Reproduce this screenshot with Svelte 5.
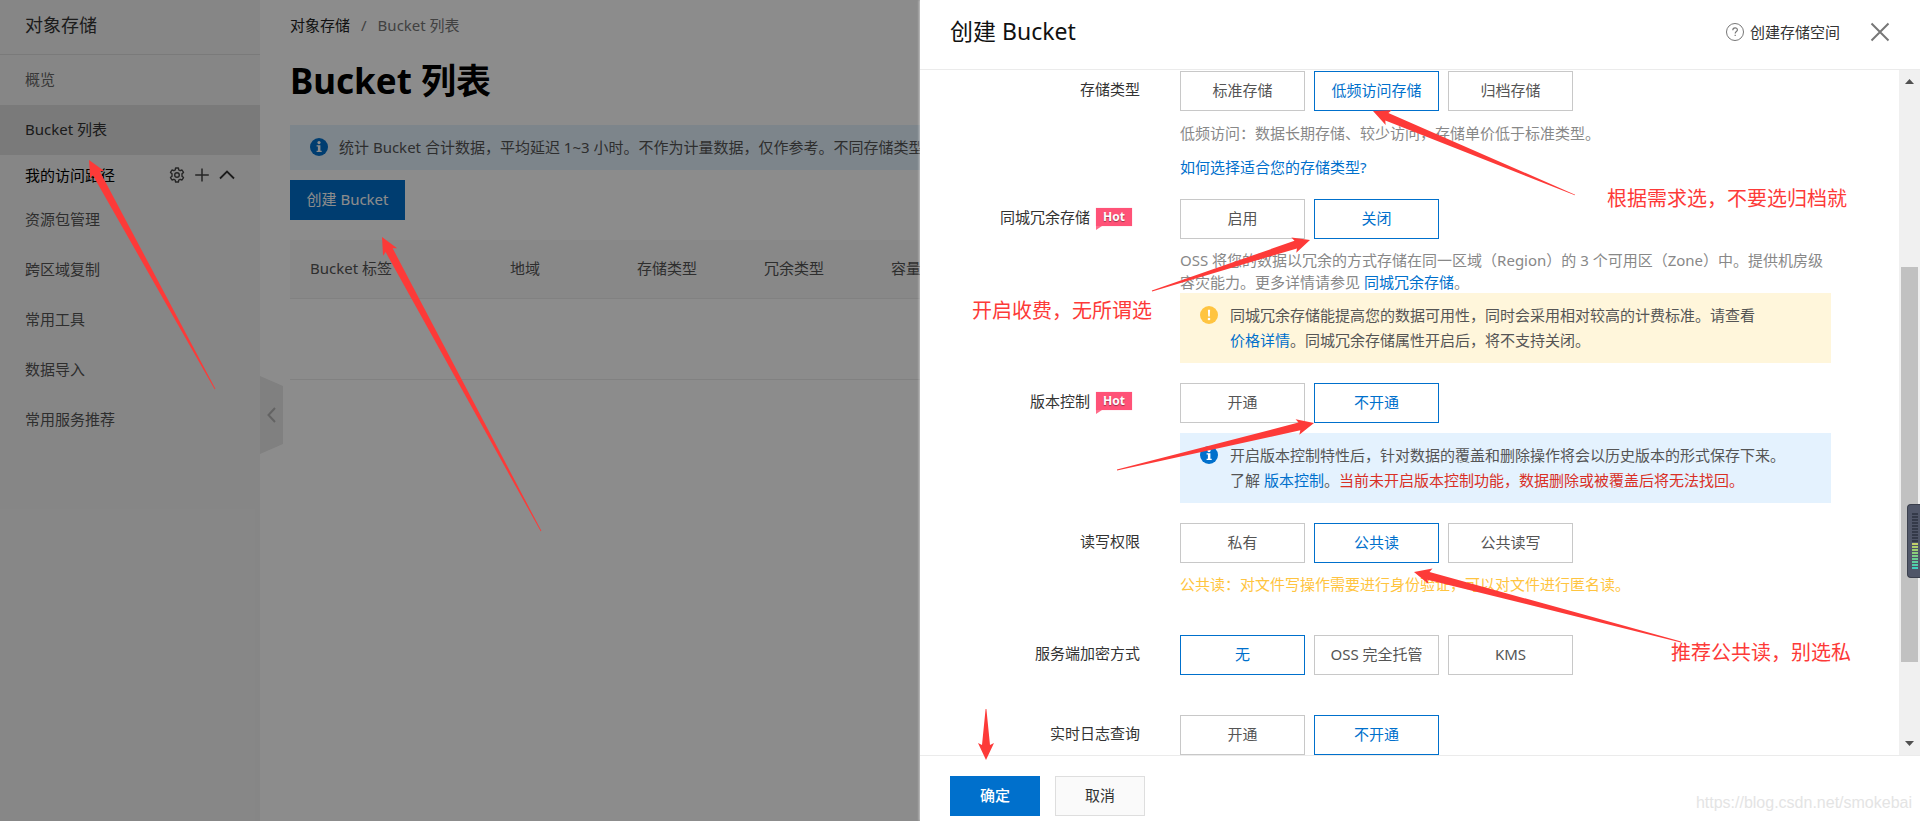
<script>
  const pathLinks = ['资源包管理', '跨区域复制', '常用工具', '数据导入', '常用服务推荐'];
  const columns = ['Bucket 标签', '地域', '存储类型', '冗余类型', '容量'];

  let picked = $state({
    storage: '低频访问存储',
    redundancy: '关闭',
    versioning: '不开通',
    acl: '公共读',
    encryption: '无',
    logging: '不开通'
  });

  // Each arrow runs from a thin tail to a barbed head.
  const arrows = [
    { tip: [89, 160], tail: [215, 389] },
    { tip: [382, 237], tail: [541, 531] },
    { tip: [1373, 111], tail: [1575, 195] },
    { tip: [1310, 240], tail: [1152, 291] },
    { tip: [1314, 423], tail: [1117, 470] },
    { tip: [1414, 572], tail: [1681, 642] },
    { tip: [986, 760], tail: [986, 709] }
  ];

  function arrowPoints({ tip, tail }) {
    const dx = tail[0] - tip[0];
    const dy = tail[1] - tip[1];
    const len = Math.hypot(dx, dy);
    const u = [dx / len, dy / len];
    const at = (along, side) =>
      `${tip[0] + u[0] * along - u[1] * side},${tip[1] + u[1] * along + u[0] * side}`;
    return [at(0, 0), at(17, 8), at(15, 4), at(len, 0.4), at(len, -0.4), at(15, -4), at(17, -8)].join(' ');
  }

  const meterBars = [
    '#343a49', '#343a49', '#343a49', '#343a49', '#343a49', '#343a49', '#343a49', '#343a49', '#343a49', '#343a49',
    '#c3d06a', '#aed06c', '#9bd070', '#8bd07a', '#7ad085', '#6ad092', '#5dd09e', '#50d0aa', '#40d0be'
  ];
</script>

{#snippet infoIcon()}
  <svg class="mark" viewBox="0 0 18 18" aria-hidden="true">
    <circle cx="9" cy="9" r="9" fill="#0070cc" />
    <circle cx="9" cy="4.6" r="1.6" fill="#fff" />
    <path d="M6.6 7.2h3.8v5.6h1.3v1.3H6.6v-1.3h1.3V8.5H6.6z" fill="#fff" />
  </svg>
{/snippet}

{#snippet options(key, names)}
  <div class="options">
    {#each names as name}
      <button type="button" class="option" class:on={picked[key] === name} aria-pressed={picked[key] === name} onclick={() => (picked[key] = name)}>{name}</button>
    {/each}
  </div>
{/snippet}

{#snippet hot()}
  <span class="hot">Hot</span>
{/snippet}

<div class="page">
  <nav class="sidebar">
    <div class="product">对象存储</div>
    <a class="item soft" href="#overview">概览</a>
    <a class="item current" href="#buckets">Bucket 列表</a>
    <div class="group">
      <span>我的访问路径</span>
      <button type="button" class="tool" aria-label="设置">
        <svg width="16" height="16" viewBox="0 0 16 16" fill="none" stroke="#444" stroke-width="1.4" stroke-linejoin="round">
          <path d="M6.6 1h2.8l.4 2 1.3.7 1.9-.7 1.5 2.4L13 6.8v2.4l1.5 1.4L13 13l-1.900-.700-1.300.700-.400 2H6.600l-.400-2-1.300-.700L3 13l-1.500-2.400L3 9.200V6.800L1.500 5.400 3 3l1.900.700L6.200 3z" />
          <circle cx="8" cy="8" r="2.300" />
        </svg>
      </button>
      <button type="button" class="tool" aria-label="添加">
        <svg width="16" height="16" viewBox="0 0 16 16" fill="none" stroke="#444" stroke-width="1.500"><path d="M8 1.500v13M1.200 8h13.600" /></svg>
      </button>
      <button type="button" class="tool" aria-label="收起">
        <svg width="16" height="16" viewBox="0 0 16 16" fill="none" stroke="#333" stroke-width="1.800"><path d="M1 11.500 8 4.500l7 7" /></svg>
      </button>
    </div>
    {#each pathLinks as name}
      <a class="item" href="#path">{name}</a>
    {/each}
    <button type="button" class="fold" aria-label="折叠导航">
      <svg width="23" height="78" viewBox="0 0 23 78">
        <path d="M0 0 23 10v58L0 78z" fill="#e9e9e9" />
        <path d="M15 32 8.500 39l6.500 7" fill="none" stroke="#b4b4b4" stroke-width="2" />
      </svg>
    </button>
  </nav>

  <main class="main">
    <div class="crumbs"><a href="#oss">对象存储</a><span>/</span><span>Bucket 列表</span></div>
    <h1>Bucket 列表</h1>
    <div class="banner">
      {@render infoIcon()}
      <span>统计 Bucket 合计数据，平均延迟 1~3 小时。不作为计量数据，仅作参考。不同存储类型</span>
    </div>
    <button type="button" class="primary create">创建 Bucket</button>
    <table>
      <thead>
        <tr>{#each columns as name}<th>{name}</th>{/each}</tr>
      </thead>
      <tbody>
        <tr><td colspan="5"></td></tr>
      </tbody>
    </table>
  </main>

  <div class="mask"></div>

  <section class="drawer" aria-label="创建 Bucket">
    <header>
      <h2>创建 Bucket</h2>
      <a class="help" href="#help">
        <svg width="18" height="18" viewBox="0 0 18 18" fill="none" stroke="#777" stroke-width="1">
          <circle cx="9" cy="9" r="8.500" />
          <path d="M6.800 7.200c0-3 4.600-3 4.600-.3 0 1.700-2.200 1.700-2.200 3.600" stroke-width="1.200" />
          <path d="M8.600 12.300h1.200" stroke-width="1.300" />
        </svg>
        创建存储空间
      </a>
      <button type="button" class="close" aria-label="关闭">
        <svg width="20" height="20" viewBox="0 0 20 20" fill="none" stroke="#777" stroke-width="2"><path d="m1.500 1.500 17 17M18.500 1.500l-17 17" /></svg>
      </button>
    </header>

    <div class="body">
      <div class="form">
        <div class="row">
          <div class="label">存储类型</div>
          <div class="field">
            {@render options('storage', ['标准存储', '低频访问存储', '归档存储'])}
            <p class="hint">低频访问：数据长期存储、较少访问，存储单价低于标准类型。</p>
            <p class="more"><a href="#types">如何选择适合您的存储类型?</a></p>
          </div>
        </div>
        <div class="row">
          <div class="label">同城冗余存储{@render hot()}</div>
          <div class="field">
            {@render options('redundancy', ['启用', '关闭'])}
            <p class="hint">OSS 将您的数据以冗余的方式存储在同一区域（Region）的 3 个可用区（Zone）中。提供机房级<br />容灾能力。更多详情请参见 <a href="#zrs">同城冗余存储</a>。</p>
            <div class="note warn">
              <svg class="mark" viewBox="0 0 18 18" aria-hidden="true">
                <circle cx="9" cy="9" r="9" fill="#ffc440" />
                <path d="M7.900 3.800h2.200l-.3 6.600H8.200z" fill="#fff" />
                <circle cx="9" cy="13" r="1.300" fill="#fff" />
              </svg>
              <p>同城冗余存储能提高您的数据可用性，同时会采用相对较高的计费标准。请查看<br /><a href="#price">价格详情</a>。同城冗余存储属性开启后，将不支持关闭。</p>
            </div>
          </div>
        </div>
        <div class="row">
          <div class="label">版本控制{@render hot()}</div>
          <div class="field">
            {@render options('versioning', ['开通', '不开通'])}
            <div class="note info">
              {@render infoIcon()}
              <p>开启版本控制特性后，针对数据的覆盖和删除操作将会以历史版本的形式保存下来。<br />了解 <a href="#versioning">版本控制</a>。<span class="danger">当前未开启版本控制功能，数据删除或被覆盖后将无法找回。</span></p>
            </div>
          </div>
        </div>
        <div class="row">
          <div class="label">读写权限</div>
          <div class="field">
            {@render options('acl', ['私有', '公共读', '公共读写'])}
            <p class="hint caution">公共读：对文件写操作需要进行身份验证，可以对文件进行匿名读。</p>
          </div>
        </div>
        <div class="row wide">
          <div class="label">服务端加密方式</div>
          <div class="field">{@render options('encryption', ['无', 'OSS 完全托管', 'KMS'])}</div>
        </div>
        <div class="row">
          <div class="label">实时日志查询</div>
          <div class="field">{@render options('logging', ['开通', '不开通'])}</div>
        </div>
      </div>
      <div class="scrollbar">
        <svg width="9" height="5" viewBox="0 0 9 5"><path d="M0 5 4.500 0 9 5z" fill="#505050" /></svg>
        <div class="track"><div class="thumb"></div></div>
        <svg width="9" height="5" viewBox="0 0 9 5"><path d="M0 0 4.500 5 9 0z" fill="#505050" /></svg>
      </div>
    </div>

    <footer>
      <button type="button" class="primary ok">确定</button>
      <button type="button" class="cancel">取消</button>
    </footer>
  </section>

  <div class="meter" aria-hidden="true">
    {#each meterBars as color}<i style:background={color}></i>{/each}
  </div>

  <div class="watermark">https://blog.csdn.net/smokebai</div>

  <svg class="arrows" aria-hidden="true">
    {#each arrows as arrow}
      <polygon points={arrowPoints(arrow)} fill="#fd3a38" />
    {/each}
  </svg>
  <div class="remark type">根据需求选，不要选归档就</div>
  <div class="remark fee">开启收费，无所谓选</div>
  <div class="remark access">推荐公共读，别选私</div>
</div>

<style>
  :global(body) { margin: 0; }
  .page {
    position: relative;
    display: flex;
    min-height: 100vh;
    overflow: hidden;
    background: #fff;
    color: #333;
    font: 15px/22px "Noto Sans", "Noto Sans CJK SC", sans-serif;
  }
  .page * { box-sizing: border-box; }
  h1, h2, p { margin: 0; }
  a { color: #0070cc; text-decoration: none; }
  button { margin: 0; padding: 0; border: 0; background: none; font: inherit; color: inherit; cursor: pointer; }
  svg { display: block; }
  .mark { flex: none; width: 18px; height: 18px; }

  .sidebar { position: relative; flex: none; width: 260px; background: #f5f5f5; }
  .product { height: 55px; padding-left: 25px; border-bottom: 1px solid #dedede; font-size: 18px; line-height: 50px; }
  .item { display: block; height: 50px; padding-left: 25px; line-height: 48px; color: #555; }
  .item.soft { color: #666; }
  .item.current { background: #dedede; color: #333; }
  .group { display: flex; align-items: center; gap: 9px; height: 40px; padding: 0 25px; color: #000; }
  .group span { flex: 1; }
  .fold { position: absolute; left: 260px; top: 376px; z-index: 1; }

  .main { flex: 1; min-width: 0; padding: 14px 20px 0 30px; }
  .crumbs { display: flex; gap: 11px; color: #777; }
  .crumbs a { color: #222; }
  h1 { padding: 20px 0 19px; color: #000; font-size: 35px; line-height: 50px; font-weight: 700; }
  .banner { display: flex; align-items: center; gap: 11px; height: 45px; padding: 0 20px 2px; background: #e4f2fe; color: #555; white-space: nowrap; }
  .primary { background: #0070cc; color: #fff; height: 40px; padding-bottom: 2px; }
  .create { display: block; width: 115px; margin: 10px 0 20px; }
  table { width: 100%; border-collapse: collapse; table-layout: fixed; }
  th { width: 127px; height: 58px; padding: 0 20px 2px; background: #f8f8f8; border-bottom: 1px solid #ebebeb; color: #555; text-align: left; font-weight: 400; white-space: nowrap; }
  th:first-child { width: 200px; }
  th:last-child { width: auto; }
  td { height: 81px; border-bottom: 1px solid #ebebeb; }

  .mask { position: absolute; inset: 0; z-index: 2; background: rgba(0, 0, 0, 0.45); }

  .drawer {
    position: absolute;
    top: 0;
    right: 0;
    bottom: 0;
    z-index: 3;
    display: flex;
    flex-direction: column;
    width: 1000px;
    background: #fff;
    box-shadow: -1px 0 2px rgba(255, 255, 255, 0.5);
  }
  header { display: flex; align-items: center; height: 70px; padding: 0 30px 6px; border-bottom: 1px solid #ebebeb; }
  h2 { flex: 1; padding-bottom: 2px; color: #111; font-size: 23px; line-height: 32px; font-weight: 400; }
  .help { display: flex; align-items: center; gap: 6px; color: #333; }
  .close { margin-left: 30px; }
  .body { display: flex; flex: 1; min-height: 0; }
  .form { flex: 1; min-width: 0; padding: 1px 68px 0 0; overflow: hidden; }
  .row { display: grid; grid-template-columns: 220px 1fr; column-gap: 40px; margin-bottom: 20px; }
  .row.wide { margin: 40px 0; }
  .label { display: flex; justify-content: flex-end; align-items: center; height: 36px; }
  .options { display: flex; gap: 9px; }
  .option { min-width: 125px; height: 40px; padding: 0 15px 2px; border: 1px solid #c8c8c8; background: #fff; color: #555; }
  .option.on { border-color: #0070cc; color: #0070cc; }
  .hint { padding-top: 10px; color: #888; white-space: nowrap; }
  .hint.caution { color: #ffc440; }
  .more { padding: 12px 0 1px; }
  .row:first-child .hint { padding-top: 11px; }
  .hot {
    position: relative;
    width: 36px;
    height: 18px;
    margin: 0 8px 0 6px;
    background: #ff5277;
    box-shadow: 0 0 1px #ffb0c0;
    color: #fff;
    font-size: 12px;
    line-height: 17px;
    font-weight: 700;
    text-align: center;
    text-shadow: 0 1px 1px rgba(0, 0, 0, 0.4);
  }
  .hot::after { content: ""; position: absolute; left: 0; top: 18px; border-top: 4px solid #ff6b8a; border-right: 6px solid transparent; }
  .note { display: flex; gap: 12px; height: 70px; padding: 10px 20px; color: #555; line-height: 25px; white-space: nowrap; }
  .note .mark { margin-top: 3px; }
  .warn { background: #fff6db; }
  .info { margin-top: 10px; background: #e4f2fe; }
  .danger { color: #d93026; }

  .scrollbar { display: flex; flex-direction: column; align-items: center; flex: none; width: 21px; padding: 9px 0; background: #f0f0f0; }
  .track { flex: 1; width: 17px; padding-top: 183px; }
  .thumb { height: 395px; background: #c1c1c1; }

  footer { display: flex; gap: 15px; padding: 20px 30px 5px; border-top: 1px solid #ebebeb; }
  .ok { width: 90px; font-weight: 500; }
  .cancel { width: 90px; height: 40px; padding-bottom: 2px; border: 1px solid #dedede; background: #fafafa; }

  .meter {
    position: absolute;
    right: 0;
    top: 504px;
    z-index: 4;
    display: flex;
    flex-direction: column;
    gap: 1px;
    width: 13px;
    padding: 8px 2px 8px 4px;
    border: 1px solid #3a3f4c;
    border-right: 0;
    border-radius: 4px 0 0 4px;
    background: #505668;
  }
  .meter i { height: 2px; }
  .watermark { position: absolute; right: 8px; bottom: 7px; z-index: 4; color: #e4e4e4; font: 16px/22px "Liberation Sans", Arial, sans-serif; }
  .arrows { position: absolute; left: 0; top: 0; z-index: 5; width: 100%; height: 100%; pointer-events: none; }
  .remark { position: absolute; z-index: 5; color: #fd3a38; font-size: 20px; line-height: 28px; white-space: nowrap; }
  .type { left: 1607px; top: 185px; }
  .fee { left: 972px; top: 297px; }
  .access { left: 1671px; top: 639px; }
</style>
